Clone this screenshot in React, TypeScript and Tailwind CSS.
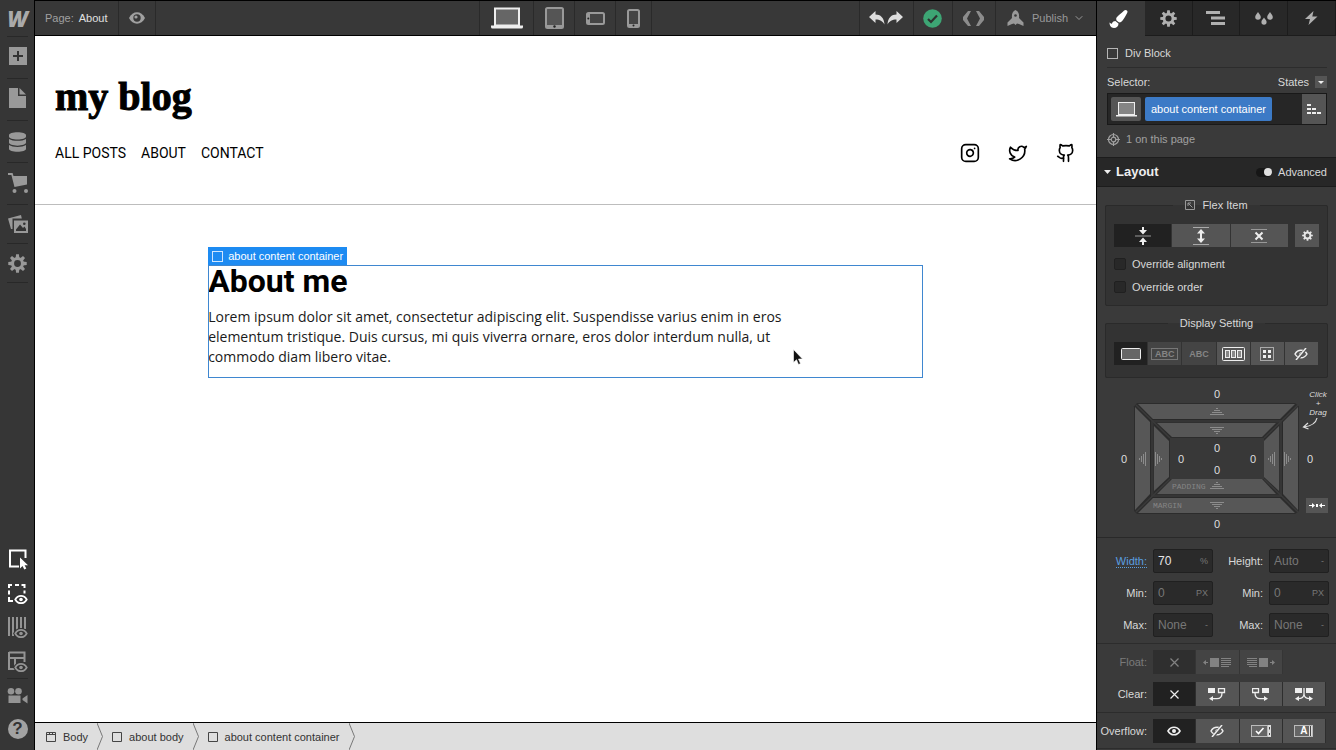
import React, { useState } from 'react';
import { ChevronDown, Github, Instagram, Twitter } from 'lucide-react';
import { FaDatabase, FaPaintBrush } from 'react-icons/fa';

interface IconProps {
  className?: string;
}

function Cog({ className = 'w-[19px] h-[19px]' }: IconProps) {
  return (
    <svg viewBox="0 0 20 20" className={className} fill="currentColor">
      <circle cx="10" cy="10" r="5.2" fill="none" stroke="currentColor" strokeWidth="3.2" />
      {[0, 45, 90, 135, 180, 225, 270, 315].map((a) => (
        <path key={a} d="M8 4.5 8.5.3h3l.5 4.2z" transform={`rotate(${a} 10 10)`} />
      ))}
    </svg>
  );
}

function PlusIcon() {
  return (
    <svg width="18" height="18" viewBox="0 0 18 18">
      <path d="M0 0h18v18H0z" fill="currentColor" />
      <path d="M9 4v10M4 9h10" stroke="#333" strokeWidth="2" />
    </svg>
  );
}

function PageIcon() {
  return (
    <svg width="17" height="20" viewBox="0 0 17 20" fill="currentColor">
      <path d="M0 0h9v8h8v12H0z" />
      <path d="M10.5 0 17 6.5h-6.5z" />
    </svg>
  );
}

function CartIcon() {
  return (
    <svg width="20" height="21" viewBox="0 0 20 21" fill="currentColor">
      <path d="M0 0h4.6l.9 3H19v8.5L6.5 14 3.4 2H0z" />
      <circle cx="6.5" cy="18" r="2" />
      <circle cx="18" cy="18" r="2" />
    </svg>
  );
}

function ImagesIcon() {
  return (
    <svg width="20" height="19" viewBox="0 0 20 19">
      <path d="M0 3.5 13 0l.8 3.5H4.5V14L3 14z" fill="currentColor" />
      <path d="M6 5.5h14V18H6z" fill="currentColor" />
      <path d="M8 16v-1.5l4-5 3 3.5 1.5-1.5L18 14v2z" fill="#333" />
      <circle cx="16.3" cy="8.7" r="1.3" fill="#333" />
    </svg>
  );
}

function MiniEye() {
  return (
    <g>
      <path d="M7.5 16.5c2.8-5.6 10.2-5.6 13 0-2.8 5.6-10.2 5.6-13 0z" fill="#333" stroke="#333" strokeWidth="2.5" />
      <path d="M8.3 16.5c2.6-4.9 8.8-4.9 11.4 0-2.6 4.9-8.8 4.9-11.4 0z" fill="none" stroke="currentColor" strokeWidth="1.8" />
      <circle cx="14" cy="16.5" r="1.8" fill="currentColor" />
    </g>
  );
}

function SelectIcon() {
  return (
    <svg width="20" height="21" viewBox="0 0 20 21">
      <path d="M11 17.5H2v-16h15.5V9" fill="none" stroke="currentColor" strokeWidth="2" />
      <path d="M12 8.5v11l2.5-2.5 1.8 3.5 2-1-1.7-3.3H20z" fill="currentColor" />
    </svg>
  );
}

function OutlineIcon() {
  return (
    <svg width="21" height="21" viewBox="0 0 21 21">
      <path
        d="M2 5V2h3M8 2h4M14.5 2h3v3M2 7.5v4M17.5 7.5v3M2 14v4h4"
        fill="none"
        stroke="currentColor"
        strokeWidth="2"
      />
      <MiniEye />
    </svg>
  );
}

function GridLinesIcon() {
  return (
    <svg width="21" height="21" viewBox="0 0 21 21">
      <path d="M2 0v19M6 0v19M10 0v19M14 0v12M18 0v12" stroke="currentColor" strokeWidth="2" />
      <MiniEye />
    </svg>
  );
}

function WireframeIcon() {
  return (
    <svg width="21" height="21" viewBox="0 0 21 21">
      <path d="M2 1.5h15.5V11M2 1v17h6M2 7h15.5M8 7v11" fill="none" stroke="currentColor" strokeWidth="2" />
      <MiniEye />
    </svg>
  );
}

function VideoIcon() {
  return (
    <svg width="21" height="16" viewBox="0 0 21 16" fill="currentColor">
      <circle cx="4" cy="3.3" r="3.3" />
      <circle cx="11.5" cy="3.3" r="3.3" />
      <path d="M1.5 7.5h12V15h-12zM15.5 10.5l5-3.5v8.5l-5-3.5z" />
    </svg>
  );
}

function PreviewEye() {
  return (
    <svg width="16" height="12" viewBox="0 0 16 12">
      <path d="M0 6c3.5-7.6 12.5-7.6 16 0-3.5 7.6-12.5 7.6-16 0z" fill="currentColor" />
      <circle cx="8" cy="6" r="3.7" fill="#383838" />
      <circle cx="7" cy="5" r="1.6" fill="currentColor" />
    </svg>
  );
}

function Laptop() {
  return (
    <svg width="32" height="22" viewBox="0 0 32 22">
      <rect x="4" y="1.5" width="24" height="17" fill="#666" stroke="#eee" strokeWidth="2" />
      <path d="M0 18.5h32V20a1.5 1.5 0 0 1-1.5 1.5h-29A1.5 1.5 0 0 1 0 20z" fill="#eee" />
    </svg>
  );
}

function SmallLaptop() {
  return (
    <svg width="21" height="15" viewBox="0 0 21 15">
      <rect x="2.5" y=".5" width="16" height="12" fill="#858585" stroke="#eee" />
      <path d="M0 13h21v1.5H0z" fill="#eee" />
    </svg>
  );
}

function Tablet() {
  return (
    <svg width="19" height="22" viewBox="0 0 19 22">
      <rect x="1" y="1" width="17" height="20" rx="1.5" fill="#555" stroke="#999" strokeWidth="2" />
      <path d="M1 18h17v3H1z" fill="#999" />
      <circle cx="9.5" cy="19.5" r="1.2" fill="#222" />
    </svg>
  );
}

function PhoneWide() {
  return (
    <svg width="19" height="13" viewBox="0 0 19 13">
      <rect x="1" y="1" width="17" height="11" rx="1.5" fill="#444" stroke="#999" strokeWidth="2" />
      <path d="M1 1h3v11H1z" fill="#999" />
      <circle cx="2.3" cy="6.5" r="1" fill="#222" />
    </svg>
  );
}

function PhoneTall() {
  return (
    <svg width="13" height="19" viewBox="0 0 13 19">
      <rect x="1" y="1" width="11" height="17" rx="1.5" fill="#444" stroke="#999" strokeWidth="2" />
      <path d="M1 15h11v3H1z" fill="#999" />
      <circle cx="6.5" cy="16.5" r="1" fill="#222" />
    </svg>
  );
}

function UndoArrow({ className }: IconProps) {
  return (
    <svg width="16" height="14" viewBox="0 0 16 14" className={className} fill="currentColor">
      <path d="M0 6 6.5 0v3.5c5 0 8.5 3 9 10C13.5 10 11 8.5 6.5 8.5V12z" />
    </svg>
  );
}

function CheckBadge() {
  return (
    <svg width="19" height="19" viewBox="0 0 19 19">
      <circle cx="9.5" cy="9.5" r="9.3" fill="#3da574" />
      <path d="m5 10 3 3 6-6.5" fill="none" stroke="#2d3330" strokeWidth="2.2" />
    </svg>
  );
}

function CodeIcon() {
  return (
    <svg width="21" height="15" viewBox="0 0 21 15" fill="currentColor">
      <path d="M5 0h3L4 7.5 8 15H5L0 9V6zM16 0h-3l4 7.5-4 7.5h3l5-6V6z" />
    </svg>
  );
}

function Rocket() {
  return (
    <svg width="17" height="16" viewBox="0 0 17 16" fill="currentColor">
      <path d="M8.5 0c3 1.5 4 4 3.5 8l4.5 4.5V16L12 14l-2-.5L8.5 15 7 13.5 5 14 .5 16v-3.500L5 8c-.5-4 .5-6.5 3.5-8z" />
      <circle cx="8.5" cy="5.5" r="1.3" fill="#383838" />
    </svg>
  );
}

function NavigatorIcon() {
  return (
    <svg width="19" height="14" viewBox="0 0 19 14" stroke="currentColor" strokeWidth="3">
      <path d="M0 1.5h14M5 7h14M5 12.5h14" />
    </svg>
  );
}

function DropsIcon() {
  return (
    <svg width="18" height="13" viewBox="0 0 18 13" fill="currentColor">
      <path d="M3 0c1 2 2.8 3.2 2.8 5a2.8 2.8 0 0 1-5.6 0C.2 3.2 2 2 3 0z" />
      <path d="M9 5.5c1 1.8 2.6 2.8 2.6 4.6a2.6 2.6 0 0 1-5.2 0c0-1.8 1.6-2.8 2.6-4.6z" />
      <path d="M15 0c1 2 2.8 3.2 2.8 5a2.8 2.8 0 0 1-5.6 0c0-1.8 1.8-3 2.8-5z" />
    </svg>
  );
}

function BoltIcon() {
  return (
    <svg width="13" height="14" viewBox="0 0 13 14" fill="currentColor">
      <path d="M8.5 0 0 8h5l-1.5 6 9-8.5H7.3z" />
    </svg>
  );
}

function TargetIcon() {
  return (
    <svg width="13" height="13" viewBox="0 0 13 13" fill="none" stroke="currentColor" strokeWidth="1.2">
      <circle cx="6.5" cy="6.5" r="5" />
      <circle cx="6.5" cy="6.5" r="2.3" />
      <path d="M6.5 0v4.5M6.5 8.5V13M0 6.5h4.5M8.5 6.5H13" />
    </svg>
  );
}

function EyeOpen() {
  return (
    <svg width="14" height="10" viewBox="0 0 14 10">
      <path d="M1 5c2.8-5 9.2-5 12 0-2.8 5-9.2 5-12 0z" fill="none" stroke="currentColor" strokeWidth="1.6" />
      <circle cx="7" cy="5" r="2" fill="currentColor" />
    </svg>
  );
}

function EyeOff() {
  return (
    <svg width="14" height="12" viewBox="0 0 14 12">
      <path d="M1 6c2.8-5 9.2-5 12 0-2.8 5-9.2 5-12 0z" fill="none" stroke="currentColor" strokeWidth="1.5" />
      <circle cx="7" cy="6" r="1.7" fill="currentColor" />
      <path d="M2.5 12.5 12.5 0" stroke="#555" strokeWidth="3" />
      <path d="M2 12 12 0" stroke="currentColor" strokeWidth="1.5" />
    </svg>
  );
}

function Cross() {
  return (
    <svg width="9" height="9" viewBox="0 0 9 9" stroke="currentColor" strokeWidth="1.2">
      <path d="m.5.5 8 8M8.5.5l-8 8" />
    </svg>
  );
}

const flexSizing = [
  {
    label: 'Shrink if needed',
    icon: (
      <svg width="16" height="18" viewBox="0 0 16 18">
        <path d="M0 9h16" stroke="#999" />
        <path d="M7 0h2v3h3L8 7.5 4 3h3zM7 18h2v-3h3l-4-4.5L4 15h3z" fill="currentColor" />
      </svg>
    ),
  },
  {
    label: 'Grow if possible',
    icon: (
      <svg width="16" height="18" viewBox="0 0 16 18">
        <path d="M0 .5h16M0 17.5h16" stroke="#aaa" />
        <path d="m8 2 4 4.5H9v5h3L8 16l-4-4.5h3v-5H4z" fill="currentColor" />
      </svg>
    ),
  },
  {
    label: "Don't shrink or grow",
    icon: (
      <svg width="16" height="14" viewBox="0 0 16 14">
        <path d="M0 .5h16M0 13.5h16" stroke="#999" />
        <path d="m4.5 3.5 7 7M11.5 3.5l-7 7" stroke="currentColor" strokeWidth="2" />
      </svg>
    ),
  },
];

const displayOptions = [
  {
    label: 'Block',
    dim: false,
    icon: (
      <svg width="20" height="12" viewBox="0 0 20 12">
        <rect x=".5" y=".5" width="19" height="11" rx="1" fill="#666" stroke="#eee" />
      </svg>
    ),
  },
  {
    label: 'Inline block',
    dim: true,
    icon: <span className="border border-[#777] px-[3px] text-[9px] leading-[10px] font-bold">ABC</span>,
  },
  { label: 'Inline', dim: true, icon: <span className="text-[9px] font-bold">ABC</span> },
  {
    label: 'Flex',
    dim: false,
    icon: (
      <svg width="23" height="14" viewBox="0 0 23 14" stroke="#eee">
        <rect x=".5" y=".5" width="22" height="13" rx="1" fill="none" />
        <rect x="3.5" y="3.5" width="4" height="7" fill="#888" />
        <rect x="9.5" y="3.5" width="4" height="7" fill="#888" />
        <rect x="15.5" y="3.5" width="4" height="7" fill="#888" />
      </svg>
    ),
  },
  {
    label: 'Grid',
    dim: false,
    icon: (
      <svg width="14" height="14" viewBox="0 0 14 14">
        <rect x=".5" y=".5" width="13" height="13" fill="none" stroke="#aaa" />
        <path d="M3 3h3v3H3zM8 3h3v3H8zM3 8h3v3H3zM8 8h3v3H8z" fill="#eee" />
      </svg>
    ),
  },
  { label: 'None', dim: false, icon: <EyeOff /> },
];

const floatOptions = [
  { label: 'None', icon: <Cross /> },
  {
    label: 'Left',
    icon: (
      <svg width="28" height="9" viewBox="0 0 28 9" fill="currentColor">
        <path d="M0 4.5 3 2v2h2v1H3v2zM7 0h9v9H7zM18 0h10v1H18zM18 2h10v1H18zM18 4h10v1H18zM18 6h10v1H18zM18 8h8v1h-8z" />
      </svg>
    ),
  },
  {
    label: 'Right',
    icon: (
      <svg width="28" height="9" viewBox="0 0 28 9" fill="currentColor">
        <path d="m28 4.500-3-2.500v2h-2v1h2v2zM12 0h9v9h-9zM0 0h10v1H0zM0 2h10v1H0zM0 4h10v1H0zM0 6h10v1H0zM2 8h8v1H2z" />
      </svg>
    ),
  },
];

const clearOptions = [
  { label: 'None', icon: <Cross /> },
  {
    label: 'Left',
    icon: (
      <svg width="18" height="13" viewBox="0 0 18 13" fill="none" stroke="currentColor">
        <path d="M0 0h7v5H0zM5 8l-4 2.8L5 13z" fill="currentColor" stroke="none" />
        <path d="M10.5.5h6v4h-6zM14 5c0 4-2 5.7-5 5.7H4" strokeWidth="1.3" />
      </svg>
    ),
  },
  {
    label: 'Right',
    icon: (
      <svg width="18" height="13" viewBox="0 0 18 13" fill="none" stroke="currentColor">
        <path d="M10 0h7v5h-7zM12 8l4 2.8L12 13z" fill="currentColor" stroke="none" />
        <path d="M.5.5h6v4h-6zM3 5c0 4 2 5.7 5 5.7h5" strokeWidth="1.3" />
      </svg>
    ),
  },
  {
    label: 'Both',
    icon: (
      <svg width="20" height="13" viewBox="0 0 20 13" fill="none" stroke="currentColor">
        <path d="M1 0h7v5H1zM12 0h7v5h-7zM5 8l-4 2.8L5 13zM15 8l4 2.8-4 2.2z" fill="currentColor" stroke="none" />
        <path d="M10 0v6c0 3-2 4.7-6 4.7M10 6c0 3 2 4.7 6 4.7" strokeWidth="1.3" />
      </svg>
    ),
  },
];

const overflowOptions = [
  { label: 'Visible', icon: <EyeOpen /> },
  { label: 'Hidden', icon: <EyeOff /> },
  {
    label: 'Scroll',
    icon: (
      <svg width="20" height="12" viewBox="0 0 20 12">
        <rect x=".5" y=".5" width="16" height="11" fill="#666" stroke="#bbb" />
        <path d="m5 6 2.5 2.5 5-5.5" fill="none" stroke="#fff" strokeWidth="1.6" />
        <path d="M18.5 0v12" stroke="#ddd" strokeWidth="3" />
        <path d="M18.5 2v2.500M18.5 8v2" stroke="#444" />
      </svg>
    ),
  },
  {
    label: 'Auto',
    icon: (
      <span className="flex h-3 items-center border border-[#bbb] bg-[#666] pl-[5px] text-[10px] font-bold text-white">
        A<span className="ml-[2px] h-[10px] w-[3px] border-x border-[#ddd] bg-[#444]" />
      </span>
    ),
  },
];

const topTools = [
  { label: 'Add elements', icon: <PlusIcon />, size: 'h-[42px] pb-[3px]' },
  { label: 'Pages', icon: <PageIcon />, size: 'h-[42px] pb-[3px]' },
  { label: 'CMS collections', icon: <FaDatabase className="h-5 w-[17px]" />, size: 'h-[42px]' },
  { label: 'Ecommerce', icon: <CartIcon />, size: 'h-[42px]' },
  { label: 'Assets', icon: <ImagesIcon />, size: 'h-[39px]' },
  { label: 'Settings', icon: <Cog />, size: 'h-[39px]' },
];

const bottomTools = [
  { label: 'Select', icon: <SelectIcon />, tone: 'text-white' },
  { label: 'Show element edges', icon: <OutlineIcon />, tone: 'text-white' },
  { label: 'Grid overlay', icon: <GridLinesIcon />, tone: 'text-[#949494]' },
  { label: 'X-ray mode', icon: <WireframeIcon />, tone: 'text-[#949494]' },
  { label: 'Video tutorials', icon: <VideoIcon />, tone: 'text-[#949494] border-t border-[#2a2a2a]' },
];

const devices = [
  { label: 'Desktop', icon: <Laptop />, width: 'w-[54px]' },
  { label: 'Tablet', icon: <Tablet />, width: 'w-[41px]' },
  { label: 'Mobile landscape', icon: <PhoneWide />, width: 'w-[41px]' },
  { label: 'Mobile portrait', icon: <PhoneTall />, width: 'w-[36px]' },
];

const tabs = [
  { label: 'Style', icon: <FaPaintBrush className="h-[18px] w-[19px]" /> },
  { label: 'Element settings', icon: <Cog className="w-[17px] h-[17px]" /> },
  { label: 'Navigator', icon: <NavigatorIcon /> },
  { label: 'Style manager', icon: <DropsIcon /> },
  { label: 'Interactions', icon: <BoltIcon /> },
];

const crumbs = ['Body', 'about body', 'about content container'];

function Sidebar() {
  return (
    <aside className="flex w-[35px] shrink-0 flex-col border-r border-black bg-[#363636] pb-1 pl-px text-[#999]">
      <button aria-label="Menu" className="flex h-9 items-center justify-center font-['Open_Sans',sans-serif] text-[22px] font-extrabold text-[#aaa] italic">
        W
      </button>
      {topTools.map((tool) => (
        <button
          key={tool.label}
          aria-label={tool.label}
          className={`mx-1.5 flex items-center justify-center border-t border-[#282828] ${tool.size}`}
        >
          {tool.icon}
        </button>
      ))}
      <div className="mx-1.5 border-t border-[#282828]" />
      <div className="mt-auto flex flex-col">
        {bottomTools.map((tool) => (
          <button
            key={tool.label}
            aria-label={tool.label}
            className={`mx-1.5 flex h-[34px] items-center justify-center ${tool.tone}`}
          >
            {tool.icon}
          </button>
        ))}
        <button aria-label="Help" className="flex h-[34px] items-center justify-center">
          <span className="flex h-5 w-5 items-center justify-center rounded-full bg-[#a2a2a2] text-[17px] font-bold text-[#333]">?</span>
        </button>
      </div>
    </aside>
  );
}

function Toolbar() {
  return (
    <header className="grid h-9 shrink-0 grid-cols-[1fr_auto_1fr] border-y border-black bg-[#383838] text-[#a0a0a0]">
      <div className="flex">
        <div className="flex items-center gap-[5px] border-r border-[#2a2a2a] px-2.5">
          <span>Page:</span>
          <span className="text-[#e0e0e0]">About</span>
        </div>
        <button aria-label="Preview" className="flex w-[37px] items-center justify-center border-r border-[#2a2a2a]">
          <PreviewEye />
        </button>
      </div>
      <div className="flex border-l border-[#2a2a2a]">
        {devices.map((d) => (
          <button key={d.label} aria-label={d.label} className={`flex items-center justify-center border-r border-[#2a2a2a] ${d.width}`}>
            {d.icon}
          </button>
        ))}
      </div>
      <div className="flex justify-end">
        <div className="flex w-[55px] items-center justify-center gap-[2px] border-x border-[#2a2a2a] text-[#dedede]">
          <button aria-label="Undo">
            <UndoArrow />
          </button>
          <button aria-label="Redo">
            <UndoArrow className="-scale-x-100" />
          </button>
        </div>
        <button aria-label="Saved" className="flex w-[39px] items-center justify-center border-r border-[#2a2a2a]">
          <CheckBadge />
        </button>
        <button aria-label="Export code" className="flex w-[43px] items-center justify-center border-r border-[#2a2a2a] text-[#8c8c8c]">
          <CodeIcon />
        </button>
        <button className="flex items-center gap-2 px-[11px] text-[#999]">
          <Rocket />
          <span className="flex items-center gap-[5px]">
            Publish
            <ChevronDown className="h-3 w-3" />
          </span>
        </button>
      </div>
    </header>
  );
}

function Canvas() {
  return (
    <main className="flex-1 overflow-hidden bg-white font-[Roboto,sans-serif] text-black">
      <div className="border-b border-[#bdbdbd] px-5 pt-9 pb-10">
        <h1 className="font-['Liberation_Serif',serif] text-[40px] leading-[50px] font-black [-webkit-text-stroke:1px_black]">
          my blog
        </h1>
        <div className="mt-5 flex items-center justify-between">
          <nav className="flex gap-[15px] text-[14px] leading-[22px]">
            <a href="#posts">ALL POSTS</a>
            <a href="#about">ABOUT</a>
            <a href="#contact">CONTACT</a>
          </nav>
          <div className="flex gap-7">
            <a href="#instagram" aria-label="Instagram"><Instagram className="h-5 w-5" /></a>
            <a href="#twitter" aria-label="Twitter"><Twitter className="h-5 w-5" /></a>
            <a href="#github" aria-label="GitHub"><Github className="h-5 w-5" /></a>
          </div>
        </div>
      </div>

      <div className="px-5 pt-[60px]">
        <section className="relative mx-auto w-[70%] pb-[11px] outline outline-1 -outline-offset-1 outline-[#3f87d0]">
          {/* Selected element badge */}
          <div className="absolute bottom-full left-0 flex h-[18px] items-center gap-[5px] bg-[#1d8bf2] px-1 font-['Liberation_Sans',sans-serif] text-[11px] whitespace-nowrap text-white">
            <span className="h-[11px] w-[11px] border border-[#cfe6ff]" />
            about content container
          </div>
          <h2 className="text-[32px] leading-8 font-bold">About me</h2>
          <p className="mt-2.5 w-5/6 font-['Open_Sans',sans-serif] text-[14px] leading-5 text-[#1a1a1a]">
            Lorem ipsum dolor sit amet, consectetur adipiscing elit. Suspendisse varius enim in eros
            elementum tristique. Duis cursus, mi quis viverra ornare, eros dolor interdum nulla, ut
            commodo diam libero vitae.
          </p>
          <svg className="absolute top-[84px] left-[585px]" width="10" height="17" viewBox="0 0 10 17">
            <path d="M.5.5v13l3-2.8 2 4.8 2-.9-2-4.600h4z" fill="#111" stroke="#fff" strokeWidth=".6" />
          </svg>
        </section>
      </div>
    </main>
  );
}

function Breadcrumbs() {
  return (
    <footer className="flex h-7 shrink-0 items-stretch border-t border-black bg-[#dedede] pl-[11px] text-[#333]">
      {crumbs.map((crumb, i) => (
        <div key={crumb} className="flex items-center">
          <button className="flex items-center gap-[7px] pr-[9px]">
            <svg width="10" height="10" viewBox="0 0 10 10" fill="none" stroke="#444">
              <path d="M.5.5h9v9h-9z" />
              {i === 0 && <path d="M1 2.5h8M3.5 1v1M6.5 1v1" />}
            </svg>
            {crumb}
          </button>
          <svg width="6" height="27" viewBox="0 0 6 27" className="mr-[9px]" fill="none" stroke="#777">
            <path d="m0 0 5.5 13.5L0 27" />
          </svg>
        </div>
      ))}
    </footer>
  );
}

function BoxModel() {
  const numbers = [
    [120, 19], [27, 84], [213, 84], [120, 149],
    [120, 73], [84, 84], [156, 84], [120, 95],
  ];
  const arrows: [number, number, number][] = [
    [121, 37, 0], [121, 55, 180], [121, 111, 0], [121, 130, 180],
    [47, 84, -90], [62, 84, 90], [176, 84, -90], [191, 84, 90],
  ];
  return (
    <div className="relative flex h-40 justify-center border-b border-[#292929]">
      <svg width="239" height="158" viewBox="1 3 239 158" fontFamily="Liberation Sans, sans-serif">
        <path d="M41 28h158l4 3.5V136l-4 3H41l-3-3V31.5z" fill="#2c2c2c" />
        <path d="M54.5 44.5h132v78h-132z" fill="#353535" stroke="#292929" />
        <path d="M57.5 47.5h126v72h-126z" fill="#2c2c2c" />
        <path d="M40 30l34 33M202 30l-34 33M40 137l34-33M202 137l-34-33" stroke="#3a3a3a" strokeWidth="1.5" />
        <path d="M74 63h94v41H74z" fill="#383838" />
        <g fill="#575757">
          <path d="M42 29h157l-15 15H57zM39 32l15 15v72l-15 16zM42 138h157l-15-15H57zM202 32l-15 15v72l15 16z" />
          <path d="M61 48h119l-14 14H76zM58 51l15 15v36l-15 14zM61 119h119l-14-15H76zM183 51l-15 15v36l15 14z" />
        </g>
        {/* stacked hairlines that make the small arrows */}
        {arrows.map(([x, y, a]) => (
          <path
            key={`${x}-${y}`}
            d="M-1-3.5h2M-3-1.5h6M-5 .5h10M-7 2.5h14"
            stroke="#8c8c8c"
            transform={`translate(${x} ${y}) rotate(${a})`}
          />
        ))}
        <g fill="#dedede" fontSize="11" textAnchor="middle">
          {numbers.map(([x, y]) => (
            <text key={`${x}-${y}`} x={x + 1} y={y + 4}>0</text>
          ))}
        </g>
        <g fill="#858585" fontSize="8" fontFamily="Liberation Mono, monospace">
          <text x="76" y="114">PADDING</text>
          <text x="57" y="133">MARGIN</text>
        </g>
        <g fill="#dedede" fontSize="8" fontStyle="italic" textAnchor="middle">
          <text x="222" y="22">Click</text>
          <text x="222" y="31">+</text>
          <text x="222" y="40">Drag</text>
        </g>
        <path d="M221 43c-1 5-6 8-13 9m4-4-4.5 4 5 2" fill="none" stroke="#dedede" strokeWidth="1.2" />
      </svg>
      <button aria-label="Center element" className="absolute right-2 bottom-6 flex h-[15px] w-[22px] items-center justify-center bg-[#555]">
        <svg width="16" height="5" viewBox="0 0 16 5" fill="#fff">
          <path d="M0 2h3V0l3 2.500L3 5V3H0zM16 2h-3V0l-3 2.500L13 5V3h3zM7 1h2v3H7z" />
        </svg>
      </button>
    </div>
  );
}

interface SizeFieldProps {
  id: string;
  label: string;
  unit: string;
  value?: string;
  placeholder?: string;
}

function SizeField({ id, label, unit, value, placeholder }: SizeFieldProps) {
  return (
    <div className="flex items-center gap-1.5">
      <label htmlFor={id} className="w-[50px] text-right">
        {value ? <span className="border-b border-dotted border-[#5a9fe0] text-[#5a9fe0]">{label}:</span> : `${label}:`}
      </label>
      <div className="flex h-6 min-w-0 flex-1 items-center rounded-[2px] border border-[#202020] bg-[#2a2a2a] px-1">
        <input
          id={id}
          defaultValue={value}
          placeholder={placeholder}
          className="w-full min-w-0 bg-transparent text-[12px] text-[#e6e6e6] outline-none placeholder:text-[#777]"
        />
        <span className="text-[9px] text-[#777]">{unit}</span>
      </div>
    </div>
  );
}

interface ButtonRowProps {
  label: string;
  options: { label: string; icon: React.ReactNode }[];
  disabled?: boolean;
}

function ButtonRow({ label, options, disabled }: ButtonRowProps) {
  const [active, setActive] = useState(0);
  return (
    <div className={`flex items-center gap-1.5 pr-2.5 ${disabled ? 'opacity-40' : ''}`}>
      <span className="w-[50px] text-right whitespace-nowrap">{label}:</span>
      <div className="grid flex-1 grid-cols-4">
        {options.map((o, i) => (
          <button
            key={o.label}
            disabled={disabled}
            aria-label={`${label} ${o.label}`}
            onClick={() => setActive(i)}
            className={`flex h-6 items-center justify-center border-r border-[#2e2e2e] text-[#eee] ${i === active ? 'bg-[#212121]' : 'bg-[#555]'}`}
          >
            {o.icon}
          </button>
        ))}
      </div>
    </div>
  );
}

function StylePanel() {
  const [sizing, setSizing] = useState(0);
  const [display, setDisplay] = useState(0);

  return (
    <aside className="flex w-60 shrink-0 flex-col overflow-hidden border-l border-black bg-[#3a3a3a] text-[#d8d8d8]">
      <div className="grid h-9 shrink-0 grid-cols-5 border-t border-black">
        {tabs.map((tab, i) => (
          <button
            key={tab.label}
            aria-label={tab.label}
            className={`flex items-center justify-center ${i === 0 ? 'bg-[#3a3a3a] pr-1 text-white' : 'border-r border-b border-[#1c1c1c] bg-[#282828] text-[#b0b0b0]'}`}
          >
            {tab.icon}
          </button>
        ))}
      </div>

      <div className="pr-[9px] pl-2.5">
        <div className="flex h-8 items-center gap-[7px] border-b border-[#2c2c2c] pt-[3px]">
          <span className="h-[11px] w-[11px] border border-[#b5b5b5]" />
          Div Block
        </div>
        <div className="flex h-[25px] items-center justify-between pt-[3px]">
          <span>Selector:</span>
          <button className="flex items-center gap-1.5">
            States
            <span className="flex h-3 w-3 items-center justify-center bg-[#555]">
              <svg width="6" height="3" viewBox="0 0 6 3" fill="#eee"><path d="M0 0h6L3 3z" /></svg>
            </span>
          </button>
        </div>
        <div className="flex h-8 items-center border border-[#191919] bg-[#262626] pl-[3px]">
          <button aria-label="Breakpoint" className="flex h-6 w-[30px] items-center justify-center rounded-[2px] bg-[#555]">
            <SmallLaptop />
          </button>
          <button className="ml-1 h-6 rounded-[2px] bg-[#3c7ac6] px-1.5 whitespace-nowrap text-white">
            about content container
          </button>
          <button aria-label="Inheritance" className="ml-auto flex h-full w-6 items-center justify-center bg-[#555]">
            <svg width="14" height="10" viewBox="0 0 14 10" stroke="#eee" strokeWidth="2">
              <path d="M0 1h4M0 5h4M5 5h4M0 9h4M5 9h4M10 9h4" />
            </svg>
          </button>
        </div>
        <div className="flex h-8 items-center gap-1.5 pb-1 text-[#a0a0a0]">
          <TargetIcon />
          1 on this page
        </div>
      </div>

      <div className="flex h-[30px] shrink-0 items-center justify-between border-y border-[#1c1c1c] bg-[#272727] pr-[9px] pl-[7px]">
        <h3 className="flex items-center gap-[5px] text-[13px] font-bold text-[#eee]">
          <svg width="7" height="4" viewBox="0 0 7 4" fill="currentColor"><path d="M0 0h7L3.5 4z" /></svg>
          Layout
        </h3>
        <button role="switch" aria-checked="false" className="flex items-center gap-1.5">
          <span className="flex h-[9px] w-4 items-center justify-end rounded-full bg-[#161616]">
            <span className="h-2 w-2 rounded-full bg-[#e0e0e0]" />
          </span>
          Advanced
        </button>
      </div>

      <fieldset className="mx-2 mt-[9px] rounded-[2px] border border-[#2a2a2a] bg-[#333] px-2 pb-3">
        <legend className="mx-auto flex h-[18px] items-center gap-[7px] px-3">
          <svg width="10" height="10" viewBox="0 0 10 10" fill="none" stroke="#999">
            <path d="M.5.5h9v9h-9zM3 6V3h3M3 3l4.5 4.5" />
          </svg>
          Flex Item
        </legend>
        <div className="mt-2.5 flex gap-1.5">
          <div className="grid flex-1 grid-cols-3">
            {flexSizing.map((o, i) => (
              <button
                key={o.label}
                aria-label={o.label}
                onClick={() => setSizing(i)}
                className={`flex h-[23px] items-center justify-center border-r border-[#333] text-[#eee] ${i === sizing ? 'bg-[#212121]' : 'bg-[#555]'}`}
              >
                {o.icon}
              </button>
            ))}
          </div>
          <button aria-label="Flex item settings" className="flex h-[23px] w-6 items-center justify-center bg-[#555] text-[#e6e6e6]">
            <Cog className="w-[11px] h-[11px]" />
          </button>
        </div>
        {['Override alignment', 'Override order'].map((label) => (
          <label key={label} className="mt-[11px] flex h-3 items-center gap-1.5">
            <input type="checkbox" className="h-3 w-3 appearance-none rounded-[2px] border border-[#202020] bg-[#282828] checked:bg-[#3c7ac6]" />
            {label}
          </label>
        ))}
      </fieldset>

      <fieldset className="mx-2 mt-2 rounded-[2px] border border-[#2a2a2a] bg-[#333] px-2 pb-3">
        <legend className="mx-auto h-[18px] px-3 leading-[18px]">Display Setting</legend>
        <div className="mt-2.5 grid grid-cols-6">
          {displayOptions.map((o, i) => (
            <button
              key={o.label}
              aria-label={o.label}
              onClick={() => setDisplay(i)}
              className={`flex h-[23px] items-center justify-center border-r border-[#333] ${
                i === display ? 'bg-[#212121]' : o.dim ? 'bg-[#444] text-[#858585]' : 'bg-[#555] text-[#eee]'
              }`}
            >
              {o.icon}
            </button>
          ))}
        </div>
      </fieldset>

      <BoxModel />

      <div className="grid grid-cols-2 gap-y-2 border-b border-[#2c2c2c] pt-[11px] pr-[7px] pb-1.5">
        <SizeField id="width" label="Width" value="70" unit="%" />
        <SizeField id="height" label="Height" placeholder="Auto" unit="-" />
        <SizeField id="min-width" label="Min" placeholder="0" unit="PX" />
        <SizeField id="min-height" label="Min" placeholder="0" unit="PX" />
        <SizeField id="max-width" label="Max" placeholder="None" unit="-" />
        <SizeField id="max-height" label="Max" placeholder="None" unit="-" />
      </div>
      <div className="flex flex-col gap-2 border-b border-[#2c2c2c] py-1.5">
        <ButtonRow label="Float" options={floatOptions} disabled />
        <ButtonRow label="Clear" options={clearOptions} />
      </div>
      <div className="border-b border-[#2c2c2c] pt-1.5 pb-[5px]">
        <ButtonRow label="Overflow" options={overflowOptions} />
      </div>
    </aside>
  );
}

export default function App() {
  return (
    <div className="flex h-screen overflow-hidden bg-[#3a3a3a] font-['Liberation_Sans',Arial,sans-serif] text-[11px] leading-4">
      <Sidebar />
      <div className="flex min-w-0 flex-1 flex-col">
        <Toolbar />
        <Canvas />
        <Breadcrumbs />
      </div>
      <StylePanel />
    </div>
  );
}
